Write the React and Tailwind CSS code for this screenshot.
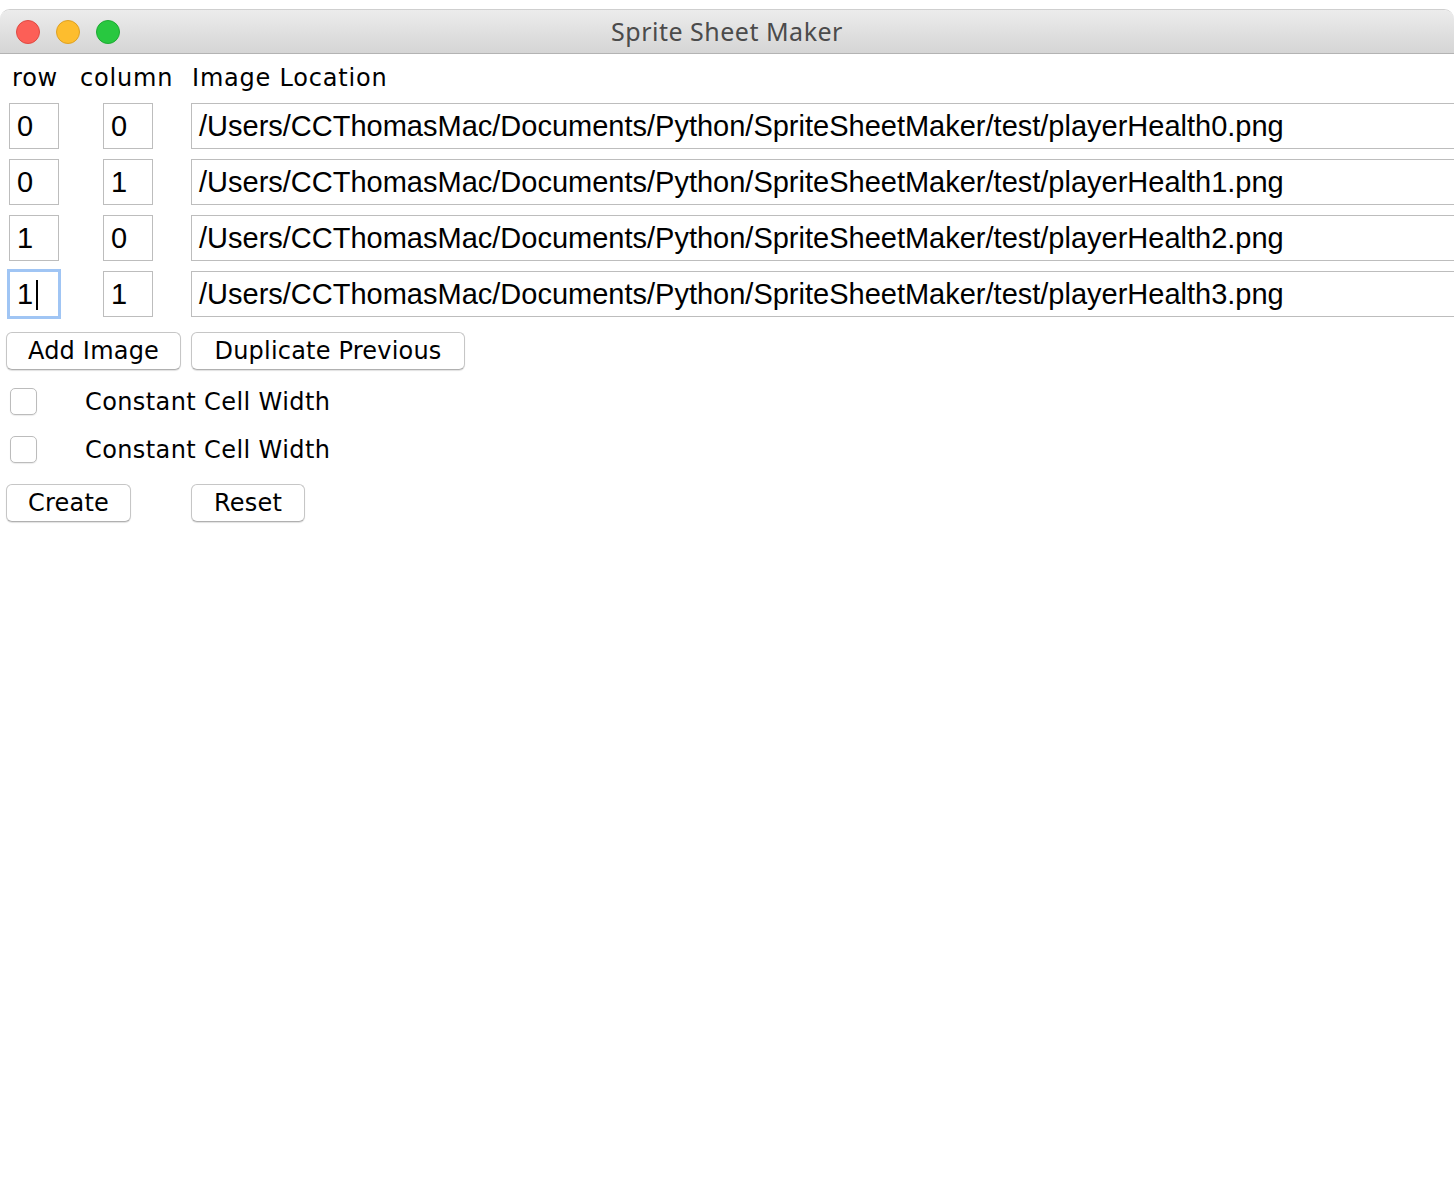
import { useState } from 'react'

const ROWS = [
  { row: '0', col: '0', path: '/Users/CCThomasMac/Documents/Python/SpriteSheetMaker/test/playerHealth0.png' },
  { row: '0', col: '1', path: '/Users/CCThomasMac/Documents/Python/SpriteSheetMaker/test/playerHealth1.png' },
  { row: '1', col: '0', path: '/Users/CCThomasMac/Documents/Python/SpriteSheetMaker/test/playerHealth2.png' },
  { row: '1', col: '1', path: '/Users/CCThomasMac/Documents/Python/SpriteSheetMaker/test/playerHealth3.png' },
]

const font = { fontFamily: '"DejaVu Sans", "Liberation Sans", sans-serif' }
const entryFont = { fontFamily: '"Liberation Sans", Arial, sans-serif' }

function Entry({ value, width, focused }) {
  const edge = focused
    ? 'border-[#a0c5f4] outline-2 outline-solid outline-[#a0c5f4]'
    : 'border-[#bdbdbd]'
  return (
    <div
      className={`h-[46px] ${width} border ${edge} bg-white pl-[7px] pt-[1px] flex items-center text-[29px] text-black whitespace-nowrap overflow-hidden`}
      style={entryFont}
    >
      <span>{value}</span>
      {focused && <span className="ml-[3px] w-[2px] h-[30px] bg-black" />}
    </div>
  )
}

function Button({ children, className }) {
  return (
    <button
      className={`h-[38px] rounded-[6px] border border-[#c6c6c6] border-b-[#b0b0b0] bg-white text-[24px] tracking-[0.2px] text-black shadow-[0_1px_1px_rgba(0,0,0,0.12)] flex items-center justify-center ${className}`}
    >
      {children}
    </button>
  )
}

function Check({ label }) {
  const [on, setOn] = useState(false)
  return (
    <div className="flex items-center h-[27px]">
      <button
        onClick={() => setOn(!on)}
        className="ml-[10px] w-[27px] h-[27px] rounded-[5px] border border-[#bcbcbc] bg-white shadow-[0_1px_1px_rgba(0,0,0,0.08)]"
      />
      <span className="ml-[48px] text-[24px] tracking-[0.4px] text-black">{label}</span>
    </div>
  )
}

export default function App() {
  return (
    <div className="w-[1454px] h-[1204px] bg-white overflow-hidden pt-[9px]" style={font}>
      <div className="h-[1195px] rounded-t-[10px] border-t border-[#cfcfcf] bg-white overflow-hidden">
        <div className="h-[44px] bg-gradient-to-b from-[#ececec] to-[#d5d5d5] border-b border-[#b3b3b3] relative flex items-center justify-center">
          <div className="absolute left-[16px] top-[10px] flex gap-[16px]">
            <span className="w-[24px] h-[24px] rounded-full bg-[#fc5f57] border border-[#df4a42]" />
            <span className="w-[24px] h-[24px] rounded-full bg-[#fdbd2e] border border-[#dea123]" />
            <span className="w-[24px] h-[24px] rounded-full bg-[#28c840] border border-[#1eaa33]" />
          </div>
          <span
            className="text-[25px] text-[#4b4b4b] tracking-[0.5px]"
            style={{ fontFamily: '"Noto Sans", "Liberation Sans", sans-serif' }}
          >
            Sprite Sheet Maker
          </span>
        </div>

        <div className="flex flex-col">
          <div className="h-[48px] flex items-center text-[24px] tracking-[0.8px] text-black">
            <span className="ml-[12px] w-[68px]">row</span>
            <span className="w-[112px]">column</span>
            <span>Image Location</span>
          </div>

          <div className="mt-[1px] flex flex-col gap-[10px]">
            {ROWS.map((r, i) => (
              <div key={i} className="flex items-center h-[46px]">
                <div className="ml-[9px]">
                  <Entry value={r.row} width="w-[50px]" focused={i === 3} />
                </div>
                <div className="ml-[44px]">
                  <Entry value={r.col} width="w-[50px]" />
                </div>
                <div className="ml-[38px]">
                  <Entry value={r.path} width="w-[1300px]" />
                </div>
              </div>
            ))}
          </div>

          <div className="mt-[15px] flex">
            <Button className="ml-[6px] w-[175px]">Add Image</Button>
            <Button className="ml-[10px] w-[274px]">Duplicate Previous</Button>
          </div>

          <div className="mt-[18px] flex flex-col gap-[21px]">
            <Check label="Constant Cell Width" />
            <Check label="Constant Cell Width" />
          </div>

          <div className="mt-[21px] flex">
            <Button className="ml-[6px] w-[125px]">Create</Button>
            <Button className="ml-[60px] w-[114px]">Reset</Button>
          </div>
        </div>
      </div>
    </div>
  )
}
